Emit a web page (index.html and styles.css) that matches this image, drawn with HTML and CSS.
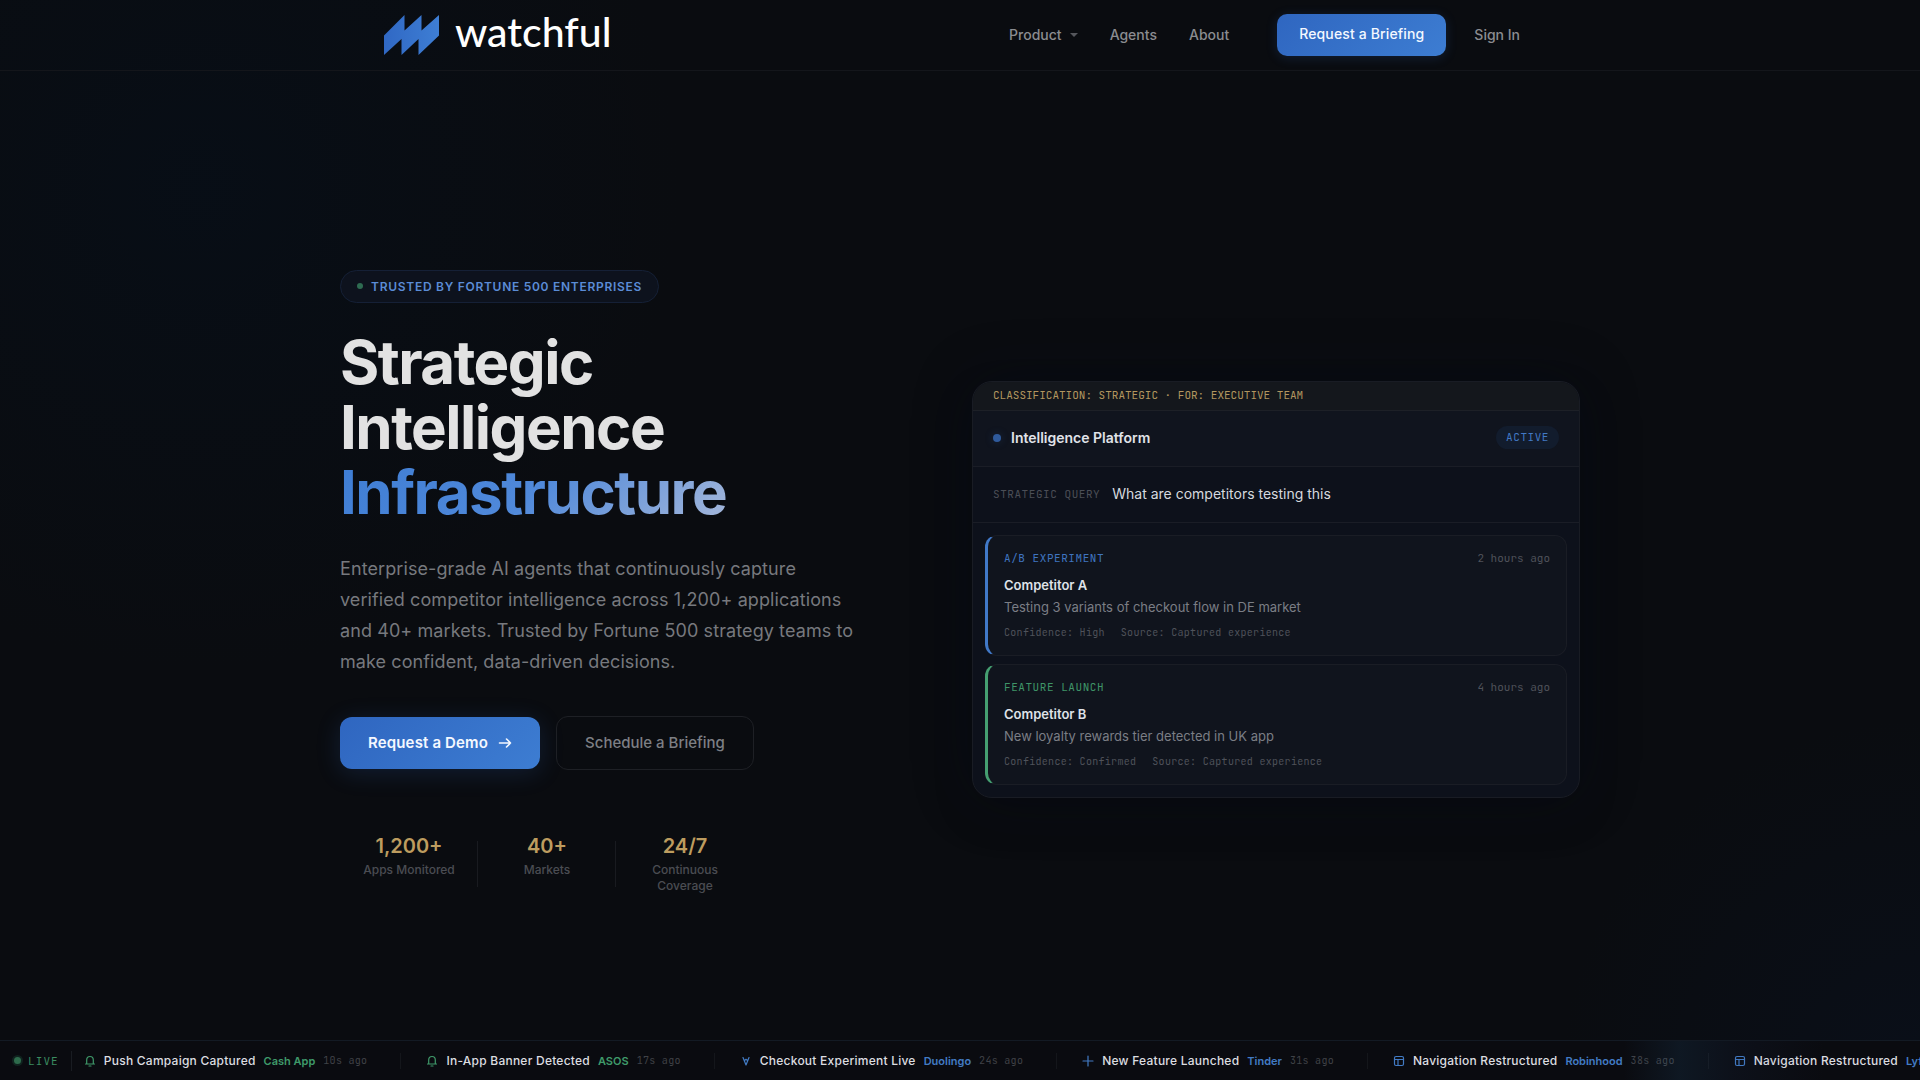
FILE: index.html
```html
<!DOCTYPE html>
<html lang="en">
<head>
    <meta charset="UTF-8">
    <meta name="viewport" content="width=device-width, initial-scale=1.0">
    <title>Watchful</title>
    <link rel="stylesheet" href="styles.css">
</head>
<body>
    <header class="header">
        <nav class="nav">
            <a href="#" class="logo">
                <svg class="logo-mark" width="55" height="40" viewBox="0 0 55 40" aria-hidden="true">
                    <defs>
                        <linearGradient id="markFill" x1="0" y1="0" x2="1" y2="0">
                            <stop offset="0" stop-color="#3068c4"/>
                            <stop offset="1" stop-color="#3e7ed4"/>
                        </linearGradient>
                    </defs>
                    <path fill="url(#markFill)" d="M0 20.500L20.500 0V15.500L37.500 0V15.500L55 0V20.500L34.500 40V24L17.500 40V24L0 40Z"/>
                </svg>
                <span class="logo-text">watchful</span>
            </a>
            <div class="nav-links">
                <button class="nav-link nav-drop" type="button">Product <span class="caret"></span></button>
                <a href="#" class="nav-link">Agents</a>
                <a href="#" class="nav-link">About</a>
            </div>
            <a href="#" class="btn-nav">Request a Briefing</a>
            <a href="#" class="nav-link sign-in">Sign In</a>
        </nav>
    </header>

    <main class="hero">
        <div class="hero-inner">
            <section class="hero-copy">
                <div class="badge"><span class="badge-dot"></span>Trusted by Fortune 500 Enterprises</div>
                <h1>
                    <span>Strategic</span>
                    <span>Intelligence</span>
                    <span class="accent">Infrastructure</span>
                </h1>
                <p class="lead">Enterprise-grade AI agents that continuously capture verified competitor intelligence across 1,200+ applications and 40+ markets. Trusted by Fortune 500 strategy teams to make confident, data-driven decisions.</p>
                <div class="actions">
                    <a href="#" class="btn btn-primary">Request a Demo
                        <svg width="14" height="14" viewBox="0 0 14 14" fill="none" stroke="currentColor" stroke-width="1.6" stroke-linecap="round" stroke-linejoin="round" aria-hidden="true"><path d="M1.500 7h11M8.500 3l4 4-4 4"/></svg>
                    </a>
                    <a href="#" class="btn btn-ghost">Schedule a Briefing</a>
                </div>
                <div class="stats">
                    <div class="stat"><strong>1,200+</strong><span>Apps Monitored</span></div>
                    <div class="stat"><strong>40+</strong><span>Markets</span></div>
                    <div class="stat"><strong>24/7</strong><span>Continuous Coverage</span></div>
                </div>
            </section>

            <section class="panel">
                <div class="panel-class">Classification: Strategic · For: Executive Team</div>
                <div class="panel-head">
                    <span class="panel-dot"></span>
                    <h2>Intelligence Platform</h2>
                    <span class="pill">Active</span>
                </div>
                <div class="panel-query">
                    <span class="query-label">Strategic Query</span>
                    <span class="query-text">What are competitors testing this</span>
                </div>
                <div class="panel-body">
                    <article class="card card-blue">
                        <div class="card-top"><span class="card-type">A/B Experiment</span><time>2 hours ago</time></div>
                        <h3>Competitor A</h3>
                        <p>Testing 3 variants of checkout flow in DE market</p>
                        <div class="card-meta"><span>Confidence: High</span><span>Source: Captured experience</span></div>
                    </article>
                    <article class="card card-green">
                        <div class="card-top"><span class="card-type">Feature Launch</span><time>4 hours ago</time></div>
                        <h3>Competitor B</h3>
                        <p>New loyalty rewards tier detected in UK app</p>
                        <div class="card-meta"><span>Confidence: Confirmed</span><span>Source: Captured experience</span></div>
                    </article>
                </div>
            </section>
        </div>
    </main>

    <svg class="sprite" aria-hidden="true">
        <symbol id="bell" viewBox="0 0 12 12"><path d="M1.500 9h9M2.700 9V5a3.300 3.500 0 0 1 6.600 0v4M5 11h2"/></symbol>
        <symbol id="split" viewBox="0 0 12 12"><path d="M3 2.500l3 7.500 3-7.500M4.200 5.800l1.800-1.500 1.800 1.500"/></symbol>
        <symbol id="plus" viewBox="0 0 12 12"><path d="M6 1v10M1 6h10"/></symbol>
        <symbol id="layout" viewBox="0 0 12 12"><rect x="1.500" y="1.500" width="9" height="9" rx="1.500"/><path d="M1.500 4.500h9M5 4.500v6"/></symbol>
    </svg>

    <footer class="ticker">
        <div class="live"><span class="live-dot"></span>Live</div>
        <div class="feed">
            <div class="event green"><svg><use href="#bell"/></svg><b>Push Campaign Captured</b><em>Cash App</em><time>10s ago</time></div>
            <div class="event green"><svg><use href="#bell"/></svg><b>In-App Banner Detected</b><em>ASOS</em><time>17s ago</time></div>
            <div class="event"><svg><use href="#split"/></svg><b>Checkout Experiment Live</b><em>Duolingo</em><time>24s ago</time></div>
            <div class="event"><svg><use href="#plus"/></svg><b>New Feature Launched</b><em>Tinder</em><time>31s ago</time></div>
            <div class="event"><svg><use href="#layout"/></svg><b>Navigation Restructured</b><em>Robinhood</em><time>38s ago</time></div>
            <div class="event"><svg><use href="#layout"/></svg><b>Navigation Restructured</b><em>Lyft</em></div>
        </div>
    </footer>
</body>
</html>
```
FILE: styles.css
```css
* {
    box-sizing: border-box;
    margin: 0;
    padding: 0;
}

body {
    min-height: 100vh;
    display: flex;
    flex-direction: column;
    overflow-x: hidden;
    color: #e2e2e2;
    font-family: Inter, "Liberation Sans", sans-serif;
    background:
        radial-gradient(circle at 200px 190px, rgba(6, 15, 26, 0.6), rgba(6, 15, 26, 0) 480px),
        radial-gradient(circle at 100% 100%, rgba(10, 18, 34, 0.5), rgba(10, 18, 34, 0) 360px),
        #0a0c10;
}

a {
    color: inherit;
    text-decoration: none;
}

/* header */
.header {
    border-bottom: 1px solid #14161b;
}
.nav {
    max-width: 1200px;
    height: 70px;
    margin: 0 auto;
    padding: 0 40px 0 24px;
    display: flex;
    align-items: center;
}
.logo {
    display: flex;
    align-items: center;
    gap: 16px;
    margin-right: auto;
}
.logo-text {
    color: #fff;
    font-family: Lato, "Open Sans", sans-serif;
    font-size: 41px;
    font-weight: 500;
    line-height: 40px;
    padding-bottom: 6px;
}
.nav-links {
    display: flex;
    align-items: center;
    gap: 32px;
    margin-right: 48px;
}
.nav-link {
    color: #8b8c90;
    font-size: 14px;
    font-weight: 500;
    line-height: 20px;
}
.nav-drop {
    display: flex;
    align-items: center;
    gap: 8px;
    border: none;
    background: none;
    font-family: inherit;
    cursor: pointer;
}
.caret {
    border: 4px solid transparent;
    border-top-color: #55575c;
    border-bottom: 0;
}
.btn-nav {
    padding: 10px 22px 12px;
    margin-right: 28px;
    border-radius: 10px;
    color: #f4f8ff;
    font-size: 14px;
    font-weight: 500;
    line-height: 20px;
    letter-spacing: 0.01em;
    background: linear-gradient(135deg, #2f66c0, #3d7dd2);
    box-shadow: 0 2px 12px rgba(48, 104, 196, 0.2);
}

/* hero */
.hero {
    flex: 1;
    display: flex;
    align-items: center;
    justify-content: center;
    padding: 116px 24px 48px;
}
.hero-inner {
    width: 100%;
    max-width: 1240px;
    display: grid;
    grid-template-columns: 1fr 1fr;
    gap: 24px;
    align-items: center;
}
.hero-copy {
    padding-bottom: 16px;
}
.badge {
    display: inline-flex;
    align-items: center;
    gap: 8px;
    padding: 8px 16px;
    border: 1px solid #152036;
    border-radius: 20px;
    background: #0d121d;
    color: #5b8cd6;
    font-size: 12px;
    font-weight: 600;
    line-height: 15px;
    letter-spacing: 0.06em;
    text-transform: uppercase;
}
.badge-dot {
    width: 6px;
    height: 6px;
    border-radius: 50%;
    background: #2e6b51;
}
h1 {
    margin-top: 27px;
    font-size: 60px;
    font-weight: 700;
    line-height: 65px;
    letter-spacing: -0.025em;
}
h1 span {
    display: block;
    width: fit-content;
}
.accent {
    color: transparent;
    background: linear-gradient(135deg, #3e7dd4 0%, #5089da 50%, #a6b8da 100%);
    -webkit-background-clip: text;
    background-clip: text;
}
.lead {
    max-width: 520px;
    margin: 28px 0 39px;
    color: #77797e;
    font-size: 18px;
    line-height: 31px;
    letter-spacing: 0.005em;
}
.actions {
    display: flex;
    align-items: center;
    gap: 16px;
}
.btn {
    display: flex;
    align-items: center;
    gap: 10px;
    padding: 16px 28px;
    border-radius: 12px;
    font-size: 15px;
    font-weight: 600;
    line-height: 20px;
}
.btn-primary {
    color: #f4f8ff;
    letter-spacing: 0.01em;
    background: linear-gradient(135deg, #2f66c0, #3d7dd2);
    box-shadow: 0 4px 24px rgba(48, 104, 196, 0.2);
}
.btn-ghost {
    border: 1px solid #1e2025;
    color: #7d7f84;
    font-weight: 500;
}
.stats {
    display: grid;
    grid-template-columns: repeat(3, 138px);
    margin-top: 64px;
}
.stat {
    position: relative;
    padding: 0 20px;
    text-align: center;
}
.stat + .stat::before {
    content: "";
    position: absolute;
    left: -1px;
    top: 7px;
    bottom: 7px;
    width: 1px;
    background: #191b20;
}
.stat strong {
    display: block;
    margin-bottom: 4px;
    color: #bd9c5f;
    font-size: 20px;
    font-weight: 600;
    line-height: 24px;
}
.stat span {
    display: block;
    color: #4b4d53;
    font-size: 12px;
    font-weight: 500;
    line-height: 16px;
}

/* intelligence panel */
.panel {
    overflow: hidden;
    border: 1px solid #191c24;
    border-radius: 20px;
    background: #0d111b;
    box-shadow: 0 16px 40px rgba(0, 0, 0, 0.15), 0 0 60px rgba(6, 14, 32, 0.3);
}
.panel-class,
.query-label,
.pill,
.card-top,
.card-meta,
.live,
.event time {
    font-family: "JetBrains Mono", "DejaVu Sans Mono", monospace;
    font-size: 11px;
    line-height: 14px;
}
.panel-class {
    padding: 6px 20px 8px;
    border-bottom: 1px solid #1d2027;
    background: #14171c;
    color: #b2965f;
    text-transform: uppercase;
}
.panel-head,
.panel-query {
    display: flex;
    align-items: center;
    height: 56px;
    padding: 0 20px 2px;
    border-bottom: 1px solid #1a1d26;
}
.panel-head {
    gap: 10px;
    background: #10141e;
}
.panel-dot {
    width: 8px;
    height: 8px;
    border-radius: 50%;
    background: #2f5a9c;
    box-shadow: 0 0 8px rgba(47, 90, 156, 0.3);
}
.panel-head h2 {
    flex: 1;
    color: #e0e3e9;
    font-size: 14px;
    font-weight: 600;
    line-height: 20px;
}
.pill {
    padding: 4px 10px 5px;
    border-radius: 12px;
    background: #121c2d;
    color: #4279c4;
    letter-spacing: 0.05em;
    text-transform: uppercase;
}
.panel-query {
    gap: 12px;
}
.query-label {
    color: #4b4e56;
    letter-spacing: 0.05em;
    text-transform: uppercase;
}
.query-text {
    color: #d6d9df;
    font-size: 14px;
    line-height: 20px;
}
.panel-body {
    display: grid;
    gap: 8px;
    padding: 12px;
}
.card {
    padding: 15px 16px;
    border: 1px solid #1a1d25;
    border-left-width: 3px;
    border-radius: 12px;
    background: #10141d;
}
.card-top {
    display: flex;
    justify-content: space-between;
    margin-bottom: 9px;
}
.card-type {
    letter-spacing: 0.05em;
    text-transform: uppercase;
}
.card-blue {
    border-left-color: #4179c8;
}
.card-blue .card-type {
    color: #3f74c0;
}
.card-green {
    border-left-color: #459f71;
}
.card-green .card-type {
    color: #3f9468;
}
.card-top time,
.card-meta {
    color: #4f525a;
}
.card h3 {
    color: #dfe2e8;
    font-size: 13px;
    font-weight: 600;
    line-height: 22px;
}
.card p {
    color: #7b7e85;
    font-size: 13px;
    line-height: 22px;
}
.card-meta {
    display: flex;
    gap: 16px;
    margin-top: 8px;
    font-size: 10px;
    letter-spacing: 0.03em;
}

/* ticker */
.sprite {
    position: absolute;
    width: 0;
    height: 0;
}
.ticker {
    position: relative;
    display: flex;
    align-items: center;
    height: 40px;
    border-top: 1px solid #131a24;
    background: #0a0b10;
    overflow: hidden;
}
.ticker::after {
    content: "";
    position: absolute;
    top: 0;
    bottom: 0;
    right: 5%;
    width: 200px;
    background: linear-gradient(90deg, transparent, rgba(45, 110, 160, 0.13) 28%, rgba(45, 80, 140, 0.08) 55%, transparent);
}
.live {
    display: flex;
    align-items: center;
    gap: 7px;
    flex: none;
    height: 20px;
    padding: 0 12px 0 14px;
    border-right: 1px solid #191c22;
    color: #3a8c61;
    letter-spacing: 0.1em;
    text-transform: uppercase;
}
.live-dot {
    width: 7px;
    height: 7px;
    border-radius: 50%;
    background: #2e6b4c;
    box-shadow: 0 0 0 2px #10231f;
}
.feed {
    display: flex;
    flex: none;
    padding-left: 12px;
}
.event {
    display: flex;
    align-items: center;
    flex: none;
    height: 16px;
    margin-right: 25px;
    padding-right: 33px;
    border-right: 1px solid #14161b;
    color: #427bc4;
    white-space: nowrap;
}
.event svg {
    width: 12px;
    height: 12px;
    margin-right: 8px;
    fill: none;
    stroke: currentColor;
    stroke-width: 1.2;
    stroke-linecap: round;
    stroke-linejoin: round;
}
.event b {
    margin-right: 8px;
    color: #dcdde0;
    font-size: 12px;
    font-weight: 500;
    letter-spacing: 0.02em;
}
.event em {
    margin-right: 8px;
    font-size: 11px;
    font-style: normal;
    font-weight: 600;
}
.event time {
    color: #404247;
    font-size: 10px;
    letter-spacing: 0.03em;
}
.green {
    color: #3f9a6a;
}
```
